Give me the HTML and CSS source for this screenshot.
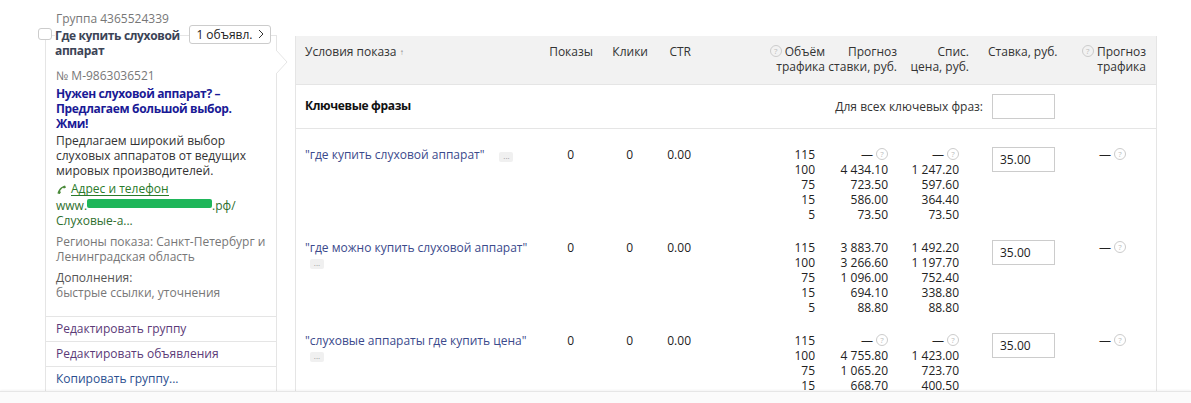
FILE: index.html
```html
<!DOCTYPE html>
<html lang="ru">
<head>
<meta charset="utf-8">
<title>Группа 4365524339</title>
<link rel="stylesheet" href="styles.css">
</head>
<body>
<div class="page">
  <aside class="group">
    <div class="group-id">Группа 4365524339</div>
    <div class="group-head">
      <span class="checkbox"></span>
      <div class="group-title"><span class="title-text">Где купить слуховой аппарат</span></div>
      <button class="ads-btn">1 объявл.
        <svg class="chev" width="6" height="10" viewBox="0 0 6 10"><path d="M1 1l4 4-4 4" fill="none" stroke="#333" stroke-width="1"/></svg>
      </button>
    </div>
    <div class="panel">
      <svg class="pointer" width="12" height="24" viewBox="0 0 12 24"><path d="M0 0l11 12L0 24" fill="#fff" stroke="#e5e5e5"/></svg>
      <div class="panel-body">
        <div class="ad-no">№ М-9863036521</div>
        <div class="ad-title">Нужен слуховой аппарат? – Предлагаем большой выбор. Жми!</div>
        <div class="ad-text">Предлагаем широкий выбор слуховых аппаратов от ведущих мировых производителей.</div>
        <div class="ad-addr">
          <svg class="phone" width="11" height="11" viewBox="0 0 11 11"><path d="M1.500 9.500C2 6 5 2.500 9 1.500L10 3.500 8 4.500 7 3.800C5.500 4.800 4.500 6 4 7.300L5 8 3.800 10z" fill="#4a8a3a"/></svg>
          <span class="addr-link">Адрес и телефон</span>
        </div>
        <div class="ad-url">www.<span class="blot"></span>.рф/<br>Слуховые-а...</div>
        <div class="ad-meta">Регионы показа: Санкт-Петербург и Ленинградская область</div>
        <div class="ad-extra"><span class="extra-label">Дополнения:</span><br>быстрые ссылки, уточнения</div>
      </div>
      <a class="action visited">Редактировать группу</a>
      <a class="action visited">Редактировать объявления</a>
      <a class="action">Копировать группу...</a>
    </div>
  </aside>

  <main class="table">
    <div class="row head">
      <div class="c-name">Условия показа <span class="sort">↑</span></div>
      <div class="num">Показы</div>
      <div class="num">Клики</div>
      <div class="num">CTR</div>
      <div class="num h-traffic"><span class="hint"><i class="q">?</i> Объём</span><br>трафика</div>
      <div class="num">Прогноз<br>ставки, руб.</div>
      <div class="num">Спис.<br>цена, руб.</div>
      <div class="h-bid">Ставка, руб.</div>
      <div class="num"><i class="q">?</i> Прогноз<br>трафика</div>
    </div>
    <div class="section">
      <b class="section-title">Ключевые фразы</b>
      <div class="all-bids">
        <span>Для всех ключевых фраз:</span>
        <input class="bid" type="text" aria-label="Ставка для всех фраз">
      </div>
    </div>

    <div class="row phrase">
      <div class="c-name"><a class="kw">"где купить слуховой аппарат"</a><span class="dots inline">...</span></div>
      <div class="num v1">0</div>
      <div class="num v2">0</div>
      <div class="num">0.00</div>
      <div class="list l-traffic">115<br>100<br>75<br>15<br>5</div>
      <div class="list l-forecast"><span class="dash">— <i class="q">?</i></span><br>4 434.10<br>723.50<br>586.00<br>73.50</div>
      <div class="list l-price"><span class="dash">— <i class="q">?</i></span><br>1 247.20<br>597.60<br>364.40<br>73.50</div>
      <div class="c-bid"><input class="bid" type="text" value="35.00" aria-label="Ставка"></div>
      <div class="f-cell">— <i class="q">?</i></div>
    </div>

    <div class="row phrase">
      <div class="c-name"><a class="kw">"где можно купить слуховой аппарат"</a><span class="dots">...</span></div>
      <div class="num v1">0</div>
      <div class="num v2">0</div>
      <div class="num">0.00</div>
      <div class="list l-traffic">115<br>100<br>75<br>15<br>5</div>
      <div class="list l-forecast">3 883.70<br>3 266.60<br>1 096.00<br>694.10<br>88.80</div>
      <div class="list l-price">1 492.20<br>1 197.70<br>752.40<br>338.80<br>88.80</div>
      <div class="c-bid"><input class="bid" type="text" value="35.00" aria-label="Ставка"></div>
      <div class="f-cell">— <i class="q">?</i></div>
    </div>

    <div class="row phrase">
      <div class="c-name"><a class="kw">"слуховые аппараты где купить цена"</a><span class="dots">...</span></div>
      <div class="num v1">0</div>
      <div class="num v2">0</div>
      <div class="num">0.00</div>
      <div class="list l-traffic">115<br>100<br>75<br>15</div>
      <div class="list l-forecast"><span class="dash">— <i class="q">?</i></span><br>4 755.80<br>1 065.20<br>668.70</div>
      <div class="list l-price"><span class="dash">— <i class="q">?</i></span><br>1 423.00<br>723.70<br>400.50</div>
      <div class="c-bid"><input class="bid" type="text" value="35.00" aria-label="Ставка"></div>
      <div class="f-cell">— <i class="q">?</i></div>
    </div>
  </main>
</div>
<div class="bottom-bar"></div>
</body>
</html>
```
FILE: styles.css
```css
html, body {
  margin: 0;
  height: 403px;
  overflow: hidden;
  background: #fff;
}
body {
  font-family: "Open Sans", "Noto Sans", sans-serif;
  font-size: 12px;
  line-height: 15px;
  letter-spacing: 0;
  color: #222;
}
.page {
  display: flex;
  align-items: flex-start;
  padding: 11px 0 0 45px;
}
.group {
  width: 232px;
  flex: none;
}
.group-id {
  padding-left: 11px;
  color: #777;
}
.group-head {
  position: relative;
  z-index: 1;
  display: flex;
  align-items: flex-start;
  gap: 3px;
  height: 31px;
  padding-left: 10px;
  margin-top: 1px;
}
.checkbox {
  position: absolute;
  left: -7px;
  top: 1px;
  width: 12px;
  height: 10px;
  border: 1px solid #ccc;
  border-radius: 3px;
  background: #fff;
}
.group-title {
  width: 131px;
  font-weight: 700;
  letter-spacing: -0.35px;
  color: #3c4456;
  padding-top: 1px;
}
.title-text { background: #fff; }
.ads-btn {
  width: 82px;
  height: 19px;
  margin: -2px 0 0 0;
  padding: 0;
  border: 1px solid #ccc;
  border-radius: 3px;
  background: #fff;
  font: inherit;
  letter-spacing: inherit;
  color: #222;
}
.chev { margin-left: 2px; }
.panel {
  position: relative;
  margin-top: -23px;
  height: 356px;
  box-sizing: border-box;
  border: 1px solid #e5e5e5;
  border-width: 1px 1px 0 1px;
  padding-top: 32px;
  display: flex;
  flex-direction: column;
}
.pointer {
  position: absolute;
  left: 230px;
  top: 14px;
}
.panel-body {
  padding-left: 10px;
  height: 248px;
  flex: none;
}
.ad-no { color: #777; }
.ad-title {
  margin-top: 3px;
  font-weight: 700;
  letter-spacing: -0.35px;
  color: #1a1a96;
  width: 195px;
}
.ad-text { margin-top: 2px; width: 205px; color: #333; }
.ad-addr {
  margin-top: 4px;
  display: flex;
  align-items: center;
  gap: 4px;
}
.addr-link {
  color: #2a7a2a;
  border-bottom: 1px solid #2a7a2a;
  line-height: 13px;
}
.ad-url { color: #2f6f2f; margin-top: 2px; }
.blot {
  display: inline-block;
  width: 125px;
  height: 9px;
  background: #1fb65a;
  border-radius: 2px;
  vertical-align: 2px;
}
.ad-meta { margin-top: 6px; color: #777; }
.ad-extra { margin-top: 6px; color: #777; }
.extra-label { color: #555; }
.action {
  display: block;
  height: 24px;
  line-height: 24px;
  padding-left: 10px;
  border-top: 1px solid #e5e5e5;
  color: #5b3a78;
}
.action:last-child { color: #2b4f8f; }

.table {
  box-sizing: border-box;
  width: 862px;
  margin: 25px 0 0 18px;
  height: 360px;
  border: 1px solid #e5e5e5;
  border-top: 0;
  border-bottom: 0;
}
.row {
  display: grid;
  grid-template-columns: 224px 64px 55px 43px 134px 72px 72px 100px 77px;
  padding: 0 9px;
}
.head {
  background: #f2f2f2;
  height: 49px;
  padding-top: 8px;
  box-sizing: border-box;
  border-bottom: 1px solid #e5e5e5;
  color: #333;
}
.num { text-align: right; white-space: nowrap; }
.v1 { padding-right: 19px; }
.v2 { padding-right: 15px; }
.sort { font-size: 8px; color: #888; vertical-align: 1px; }
.h-bid { padding-left: 19px; white-space: nowrap; }
.q {
  display: inline-block;
  box-sizing: border-box;
  width: 12px;
  height: 12px;
  border: 1px solid #ccc;
  border-radius: 50%;
  font: normal 8px/10px "Open Sans", sans-serif;
  color: #bbb;
  text-align: center;
  vertical-align: 2px;
}
.section {
  display: flex;
  justify-content: space-between;
  align-items: center;
  height: 44px;
  box-sizing: border-box;
  padding: 0 101px 0 9px;
  border-bottom: 1px solid #e5e5e5;
}
.section-title { color: #111; font-weight: 700; letter-spacing: -0.35px; margin-top: -2px; }
.all-bids { display: flex; align-items: center; gap: 9px; color: #333; }
.bid {
  box-sizing: border-box;
  width: 63px;
  height: 25px;
  border: 1px solid #ccc;
  padding: 0 0 0 7px;
  font: inherit;
  color: #222;
  outline: none;
}
.phrase {
  height: 93px;
  padding-top: 18px;
  box-sizing: border-box;
}
.kw { color: #3b4a8c; }
.dots {
  display: block;
  width: 14px;
  height: 10px;
  margin: 4px 0 0 5px;
  background: #f0f0f0;
  border-radius: 2px;
  font-size: 8px;
  line-height: 8px;
  color: #999;
  text-align: center;
}
.dots.inline {
  display: inline-block;
  margin: 0 0 0 15px;
  vertical-align: 0;
}
.list { text-align: right; padding-right: 10px; white-space: nowrap; }
.l-forecast { padding-right: 9px; }
.l-traffic { color: #222; }
.c-bid { padding-left: 23px; }
.f-cell { text-align: right; padding-right: 20px; white-space: nowrap; }
.bottom-bar {
  position: fixed;
  left: 0;
  right: 0;
  bottom: 0;
  height: 11px;
  background: #fbfbfb;
  border-top: 1px solid #e6e6e6;
  box-shadow: 0 -1px 2px rgba(0, 0, 0, 0.05);
}
```
